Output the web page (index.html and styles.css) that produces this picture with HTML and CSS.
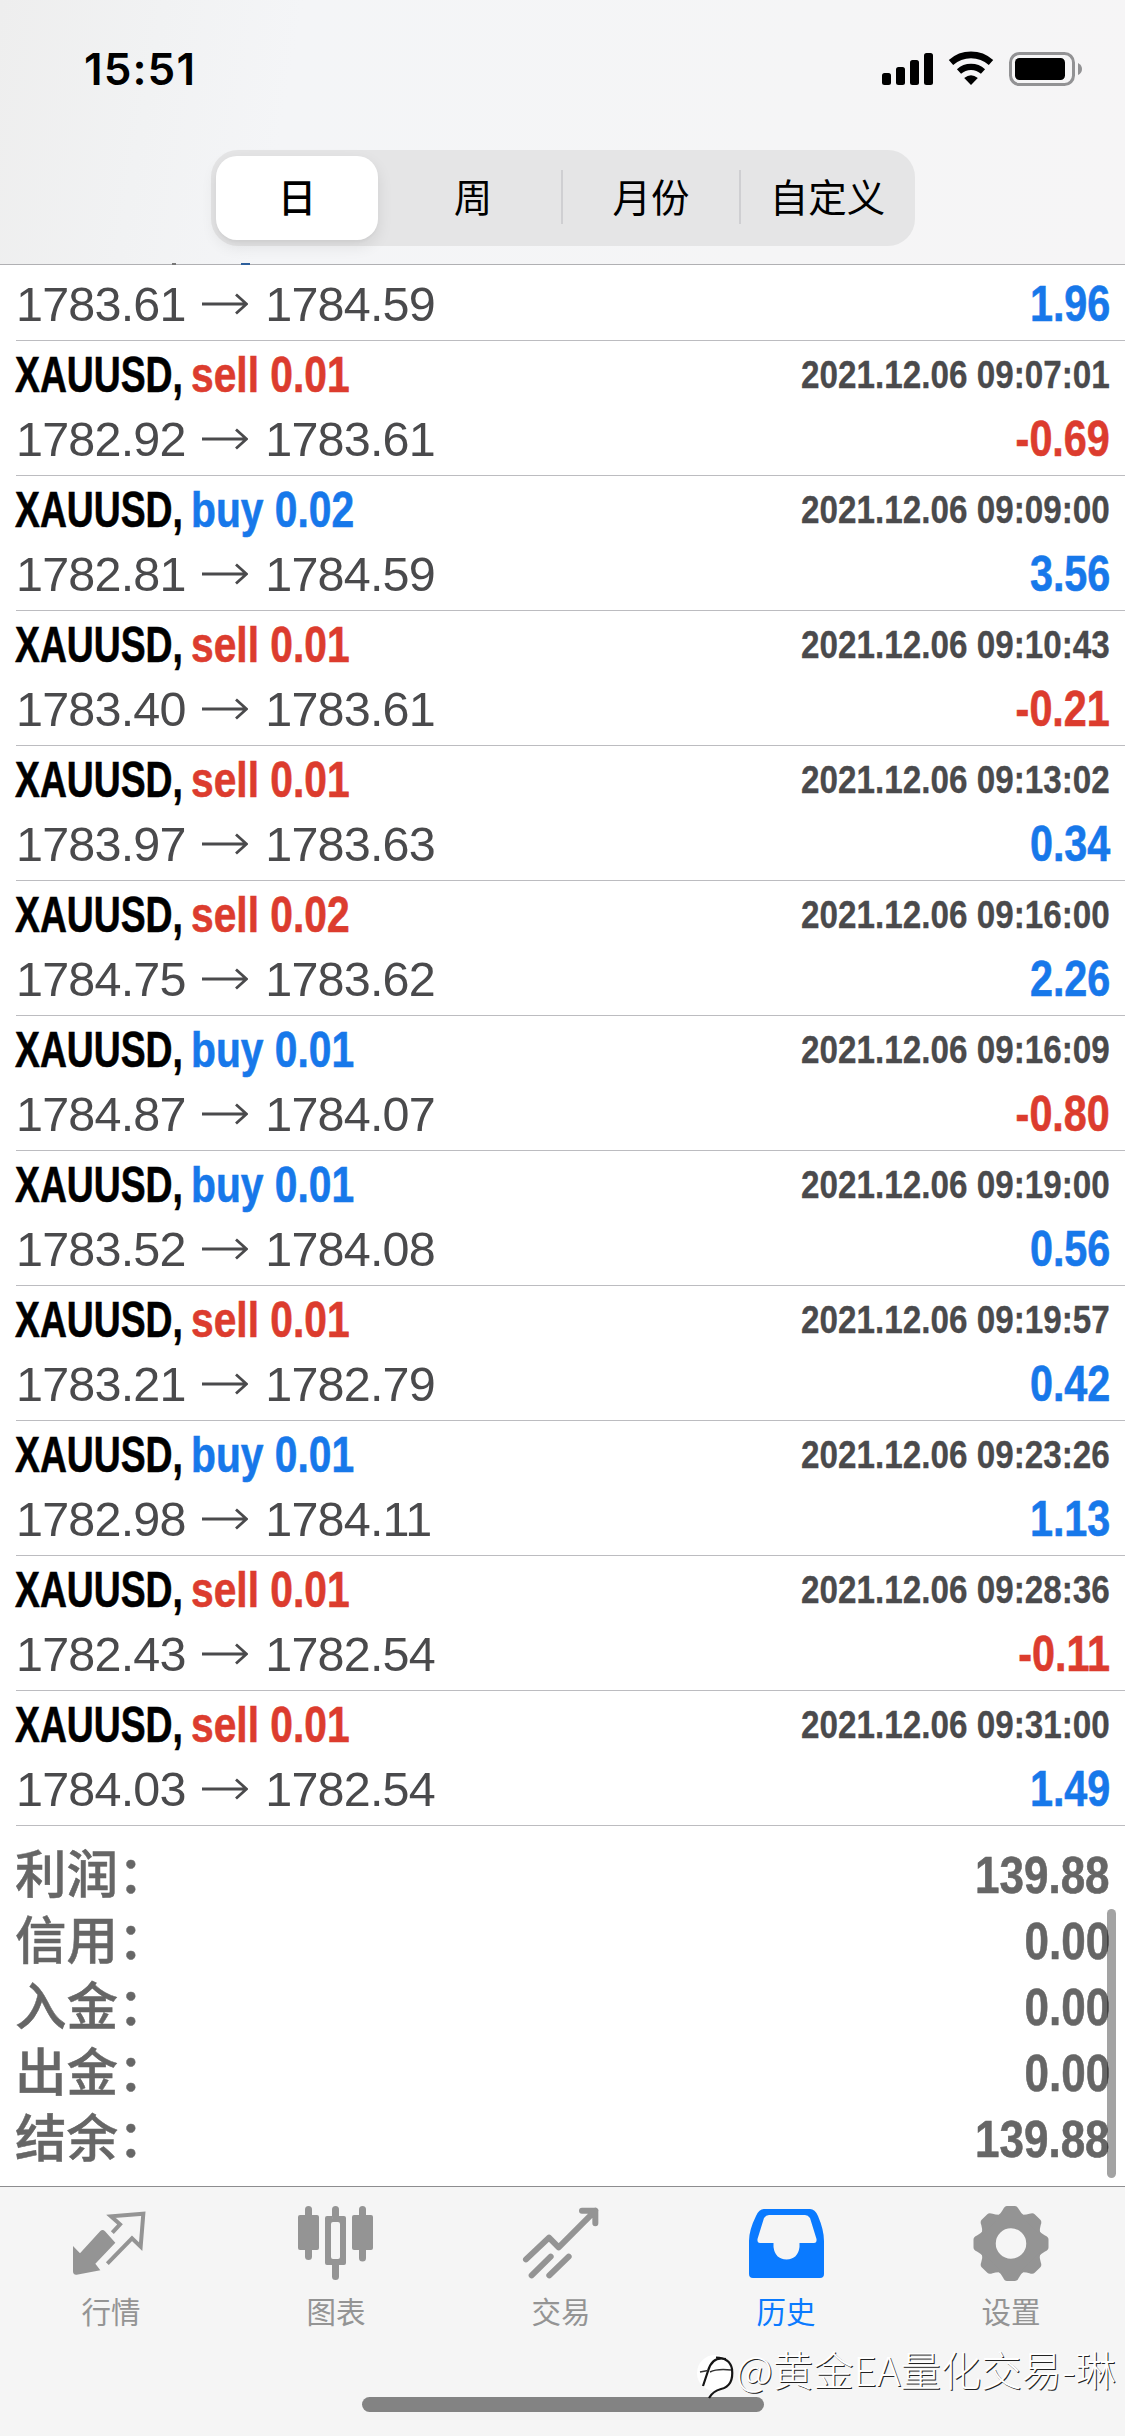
FILE: index.html
```html
<!DOCTYPE html>
<html lang="zh-CN">
<head>
<meta charset="utf-8">
<title>历史</title>
<link rel="stylesheet" href="styles.css">
</head>
<body>
<svg class="defs" width="0" height="0"><symbol id="arrow" viewBox="0 0 46 22"><path d="M0 11H44M34 1.5L44.5 11L34 20.5" fill="none" stroke="currentColor" stroke-width="2.8"/></symbol></svg>
<div class="screen">
  <header class="header">
    <div class="status">
      <span class="time">15:51</span>
      <svg class="status-icons" width="204" height="36" viewBox="0 0 204 36">
        <rect x="2" y="22" width="9" height="12" rx="2.5"/><rect x="16" y="16" width="9" height="18" rx="2.5"/><rect x="30" y="9" width="9" height="25" rx="2.5"/><rect x="44" y="2" width="9" height="32" rx="2.5"/>
        <path d="M71 11.5A30 30 0 0 1 111 11.5" fill="none" stroke="#000" stroke-width="6.6"/>
        <path d="M79 20.5A18 18 0 0 1 103 20.5" fill="none" stroke="#000" stroke-width="6.2"/>
        <path d="M84.2 27Q91 21.5 97.800 27L91 34Z"/>
        <rect x="130.500" y="2.500" width="63" height="31" rx="9" fill="none" stroke="#929294" stroke-width="3"/>
        <rect x="135" y="7" width="50" height="22" rx="4.500"/>
        <path d="M198 12Q202 14 202 18Q202 22 198 24Z" fill="#929294"/>
      </svg>
    </div>
    <nav class="segments">
      <span class="segment selected">日</span><span class="segment">周</span><span class="segment divided">月份</span><span class="segment divided">自定义</span>
    </nav>
    <i class="peek peek-comma"></i><i class="peek peek-tail"></i>
  </header>
  <main class="content">
    <section class="deals">
      <div class="deal partial"><div class="line prices"><span class="price">1783.61<svg class="arrow"><use href="#arrow"/></svg>1784.59</span><b class="profit">1.96</b></div></div>
      <div class="deal"><div class="line head"><b class="symbol">XAUUSD,</b><b class="side sell">sell 0.01</b><b class="date">2021.12.06 09:07:01</b></div><div class="line prices"><span class="price">1782.92<svg class="arrow"><use href="#arrow"/></svg>1783.61</span><b class="profit loss">-0.69</b></div></div>
      <div class="deal"><div class="line head"><b class="symbol">XAUUSD,</b><b class="side buy">buy 0.02</b><b class="date">2021.12.06 09:09:00</b></div><div class="line prices"><span class="price">1782.81<svg class="arrow"><use href="#arrow"/></svg>1784.59</span><b class="profit">3.56</b></div></div>
      <div class="deal"><div class="line head"><b class="symbol">XAUUSD,</b><b class="side sell">sell 0.01</b><b class="date">2021.12.06 09:10:43</b></div><div class="line prices"><span class="price">1783.40<svg class="arrow"><use href="#arrow"/></svg>1783.61</span><b class="profit loss">-0.21</b></div></div>
      <div class="deal"><div class="line head"><b class="symbol">XAUUSD,</b><b class="side sell">sell 0.01</b><b class="date">2021.12.06 09:13:02</b></div><div class="line prices"><span class="price">1783.97<svg class="arrow"><use href="#arrow"/></svg>1783.63</span><b class="profit">0.34</b></div></div>
      <div class="deal"><div class="line head"><b class="symbol">XAUUSD,</b><b class="side sell">sell 0.02</b><b class="date">2021.12.06 09:16:00</b></div><div class="line prices"><span class="price">1784.75<svg class="arrow"><use href="#arrow"/></svg>1783.62</span><b class="profit">2.26</b></div></div>
      <div class="deal"><div class="line head"><b class="symbol">XAUUSD,</b><b class="side buy">buy 0.01</b><b class="date">2021.12.06 09:16:09</b></div><div class="line prices"><span class="price">1784.87<svg class="arrow"><use href="#arrow"/></svg>1784.07</span><b class="profit loss">-0.80</b></div></div>
      <div class="deal"><div class="line head"><b class="symbol">XAUUSD,</b><b class="side buy">buy 0.01</b><b class="date">2021.12.06 09:19:00</b></div><div class="line prices"><span class="price">1783.52<svg class="arrow"><use href="#arrow"/></svg>1784.08</span><b class="profit">0.56</b></div></div>
      <div class="deal"><div class="line head"><b class="symbol">XAUUSD,</b><b class="side sell">sell 0.01</b><b class="date">2021.12.06 09:19:57</b></div><div class="line prices"><span class="price">1783.21<svg class="arrow"><use href="#arrow"/></svg>1782.79</span><b class="profit">0.42</b></div></div>
      <div class="deal"><div class="line head"><b class="symbol">XAUUSD,</b><b class="side buy">buy 0.01</b><b class="date">2021.12.06 09:23:26</b></div><div class="line prices"><span class="price">1782.98<svg class="arrow"><use href="#arrow"/></svg>1784.11</span><b class="profit">1.13</b></div></div>
      <div class="deal"><div class="line head"><b class="symbol">XAUUSD,</b><b class="side sell">sell 0.01</b><b class="date">2021.12.06 09:28:36</b></div><div class="line prices"><span class="price">1782.43<svg class="arrow"><use href="#arrow"/></svg>1782.54</span><b class="profit loss">-0.11</b></div></div>
      <div class="deal"><div class="line head"><b class="symbol">XAUUSD,</b><b class="side sell">sell 0.01</b><b class="date">2021.12.06 09:31:00</b></div><div class="line prices"><span class="price">1784.03<svg class="arrow"><use href="#arrow"/></svg>1782.54</span><b class="profit">1.49</b></div></div>
    </section>
    <section class="summary">
      <div class="total"><span class="label">利润：</span><b class="amount">139.88</b></div>
      <div class="total"><span class="label">信用：</span><b class="amount">0.00</b></div>
      <div class="total"><span class="label">入金：</span><b class="amount">0.00</b></div>
      <div class="total"><span class="label">出金：</span><b class="amount">0.00</b></div>
      <div class="total"><span class="label">结余：</span><b class="amount">139.88</b></div>
    </section>
    <i class="scrollbar"></i>
  </main>
  <footer class="tabbar">
    <div class="tab">
      <svg class="icon" viewBox="9 0 300 300"><path d="M45 168L66 190L127 123Q134 116 141 124L172 158L112 221L127 241L56 254Q45 255 45 244Z" fill="currentColor"/><path d="M163 128L186 103L159 79L256 71L248 170L222 145L148 221" fill="none" stroke="currentColor" stroke-width="12"/></svg>
      <span>行情</span>
    </div>
    <div class="tab">
      <svg class="icon" viewBox="0 0 100 100" fill="currentColor"><rect x="12" y="25" width="21" height="35" rx="2"/><rect x="19" y="16" width="7" height="54" rx="3.500"/><rect x="66" y="25" width="21" height="35" rx="2"/><rect x="73" y="16" width="7" height="55.500" rx="3.500"/><path d="M41 26H46V29.500Q46 26 49.500 26Q53 26 53 26H58Q60 26 60 28V73Q60 75 58 75H53V86.500Q53 90 49.500 90Q46 90 46 86.500V75H41Q39 75 39 73V28Q39 26 41 26ZM45 34V67Q45 69 47 69H52Q54 69 54 67V34Q54 32 52 32H47Q45 32 45 34Z" fill-rule="evenodd"/><rect x="46" y="16" width="7" height="14" rx="3.500"/></svg>
      <span>图表</span>
    </div>
    <div class="tab">
      <svg class="icon" viewBox="5 0 300 300" fill="none" stroke="currentColor" stroke-width="18" stroke-linecap="round" stroke-linejoin="round"><path d="M50 208L119 143L148 172L258 62M218 62H258V100M67 256L124 200M120 256L178 200"/></svg>
      <span>交易</span>
    </div>
    <div class="tab active">
      <svg class="icon" viewBox="0 0 100 100"><path d="M28 19H74Q79 19 82 26Q88 40 88 51V84Q88 88 84 88H17Q13 88 13 84V51Q13 40 20 26Q23 19 28 19ZM33 25Q30 25 28 28L21.500 49Q21 53 24 53H37.500V57Q39 69 50.500 69.500Q62 69 63.500 57V53H78Q81 53 80.500 49L74 28Q72 25 69 25Z" fill="currentColor" fill-rule="evenodd"/></svg>
      <span>历史</span>
    </div>
    <div class="tab">
      <svg class="icon" viewBox="0 0 100 100"><g transform="translate(50 53.500)"><circle r="23" fill="none" stroke="currentColor" stroke-width="15.500"/><g fill="currentColor"><g id="teeth"><path id="tooth" d="M-14 -27Q-10 -30 -8 -34Q-6.500 -37.500 -4 -37.500H4Q6.500 -37.500 8 -34Q10 -30 14 -27Z"/><use href="#tooth" transform="rotate(45)"/><use href="#tooth" transform="rotate(90)"/><use href="#tooth" transform="rotate(135)"/></g><use href="#teeth" transform="rotate(180)"/></g></g></svg>
      <span>设置</span>
    </div>
    <i class="home-indicator"></i>
    <div class="watermark">
      <svg width="40" height="44" viewBox="0 0 40 44"><circle cx="19" cy="18" r="18" fill="#fff"/><path d="M20 2.500Q34 3 36 14Q38 31 25 34Q17 36 13 43" fill="none" stroke="#151515" stroke-width="2.200"/><path d="M30 4Q16 1 12 16L7 31" fill="none" stroke="#151515" stroke-width="2.200"/><path d="M4 17L12 15.500M14 17Q21 13.500 35 15" fill="none" stroke="#333" stroke-width="1.600"/></svg>
      <span class="handle">@黄金EA量化交易-琳</span>
    </div>
  </footer>
</div>
</body>
</html>
```
FILE: styles.css
```css
* { box-sizing: border-box; }
body {
  margin: 0;
  background: #fff;
  font-family: "Liberation Sans", "Noto Sans CJK SC", sans-serif;
}
.defs { position: absolute; }
.screen {
  display: flex;
  flex-direction: column;
  width: 1125px;
  height: 2436px;
  overflow: hidden;
}

/* status bar and period switch */
.header {
  position: relative;
  flex: none;
  height: 265px;
  border-bottom: 1px solid #b0b0b3;
  background: linear-gradient(100deg, #eeeeee 0%, #f1f2f3 14%, #f4f5f7 26%, #f5f5f6 70%, #f6f5f6 100%);
}
.status {
  display: flex;
  justify-content: space-between;
  height: 150px;
  padding: 51px 41px 0 84px;
}
.time {
  font: 600 44px/36px Inter, sans-serif;
  letter-spacing: 1.1px;
  color: #000;
}
.segments {
  display: grid;
  grid-template-columns: 168px 178px 178px 1fr;
  width: 704px;
  height: 96px;
  margin-left: 211px;
  padding: 6px 0 6px 5px;
  border-radius: 27px;
  background: #e5e5e6;
}
.segment {
  position: relative;
  display: flex;
  align-items: center;
  justify-content: center;
  padding-bottom: 5px;
  color: #000;
  font: 400 38.5px/79px "Noto Sans CJK SC", sans-serif;
}
.segment.selected {
  width: 162px;
  border-radius: 21px;
  background: #fff;
  font-weight: 500;
  box-shadow: 0 6px 16px rgba(0, 0, 0, .09), 0 2px 3px rgba(0, 0, 0, .03);
}
.segment.divided::before {
  content: "";
  position: absolute;
  left: -1px;
  top: 14px;
  width: 2px;
  height: 54px;
  background: #cfcfd2;
}
.peek {
  position: absolute;
  bottom: -1px;
  height: 2px;
}
.peek-comma { left: 172px; width: 4px; background: #777; }
.peek-tail { left: 241px; width: 9px; background: #2c5f9c; }

/* deal list */
.content {
  position: relative;
  flex: 1;
}
.deal {
  height: 135px;
  margin-left: 16px;
  padding-right: 15px;
  border-bottom: 1px solid #bcbcc0;
}
.deal.partial {
  height: 76px;
  padding-top: 9px;
}
.line {
  display: flex;
  white-space: nowrap;
}
.head { height: 68px; line-height: 68px; font-size: 50px; }
.prices { height: 60px; line-height: 60px; justify-content: space-between; }
.head b, .profit, .amount { -webkit-text-stroke: .6px currentColor; }
.symbol {
  width: 176px;
  margin-left: -1px;
  color: #000;
  transform: scaleX(.746);
  transform-origin: 0 0;
}
.side {
  width: 200px;
  transform: scaleX(.815);
  transform-origin: 0 0;
}
.sell, .profit.loss { color: #dc3c2e; }
.buy, .profit { color: #1778ea; }
.head .date {
  margin-left: auto;
  color: #4a4a4c;
  font-size: 39.5px;
  line-height: 66px;
  transform: scaleX(.842);
  transform-origin: 100% 0;
  -webkit-text-stroke-width: .3px;
}
.price {
  color: #4a4a4c;
  font-size: 48.5px;
  letter-spacing: -.8px;
}
.arrow {
  width: 46px;
  height: 22px;
  margin: 0 17px 0 16.5px;
  vertical-align: 6px;
}
.profit {
  font-size: 49.5px;
  transform: scaleX(.835);
  transform-origin: 100% 0;
}

/* totals */
.summary { padding: 16px 15px 0; }
.total {
  display: flex;
  justify-content: space-between;
  height: 66px;
  line-height: 66px;
  color: #666;
}
.label {
  font-size: 51.5px;
  font-weight: 500;
  font-family: "Liberation Sans", "Noto Sans CJK SC", sans-serif;
  -webkit-text-stroke: .5px currentColor;
}
.amount {
  font-size: 52.5px;
  transform: scaleX(.838);
  transform-origin: 100% 0;
}
.scrollbar {
  position: absolute;
  right: 9px;
  top: 1644px;
  width: 9px;
  height: 269px;
  border-radius: 5px;
  background: rgba(0, 0, 0, .36);
}

/* tab bar */
.tabbar {
  position: relative;
  flex: none;
  display: grid;
  grid-template-columns: repeat(5, 225px);
  height: 250px;
  margin-right: 0;
  border-top: 1px solid #8d8d8f;
  background: #f5f5f5;
}
.tab {
  display: flex;
  flex-direction: column;
  align-items: center;
  padding: 3px 3px 0 0;
  color: #949494;
  font: 400 29.5px/40px "Noto Sans CJK SC", sans-serif;
}
.tab.active { color: #0a7aff; }
.icon { width: 100px; height: 100px; }
.home-indicator {
  position: absolute;
  left: 362px;
  top: 210px;
  width: 402px;
  height: 15px;
  border-radius: 8px;
  background: #838383;
}
.watermark {
  position: absolute;
  left: 696px;
  top: 168px;
  display: flex;
}
.handle {
  margin-top: -6px;
  color: #fff;
  font: 300 40.4px/40px "Noto Sans CJK SC", sans-serif;
  white-space: nowrap;
  text-shadow: 1px 1px 0 #222;
}
```
